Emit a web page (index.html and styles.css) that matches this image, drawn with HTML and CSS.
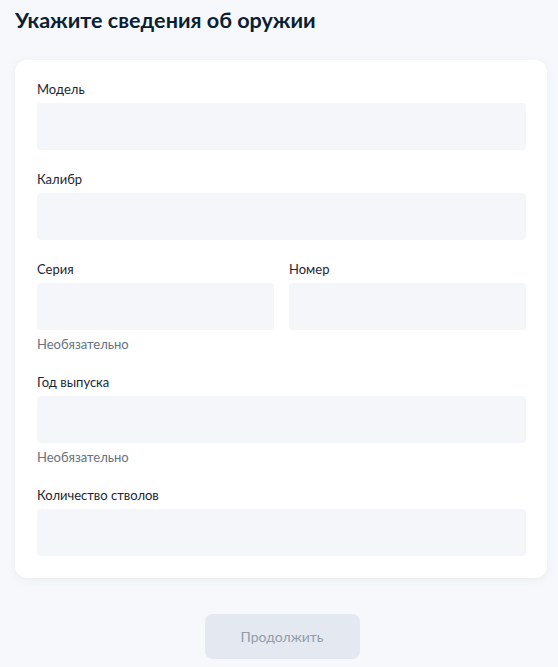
FILE: index.html
```html
<!DOCTYPE html>
<html lang="ru">
<head>
<meta charset="utf-8">
<title>Сведения об оружии</title>
<link rel="stylesheet" href="styles.css">
</head>
<body>
<main class="page">
  <h1 class="title">Укажите сведения об оружии</h1>
  <section class="card">
    <div class="field">
      <label class="label">Модель</label>
      <div class="input"></div>
    </div>
    <div class="field">
      <label class="label">Калибр</label>
      <div class="input"></div>
    </div>
    <div class="row">
      <div class="field">
        <label class="label">Серия</label>
        <div class="input"></div>
        <div class="hint">Необязательно</div>
      </div>
      <div class="field">
        <label class="label">Номер</label>
        <div class="input"></div>
      </div>
    </div>
    <div class="field">
      <label class="label">Год выпуска</label>
      <div class="input"></div>
      <div class="hint">Необязательно</div>
    </div>
    <div class="field">
      <label class="label">Количество стволов</label>
      <div class="input"></div>
    </div>
  </section>
  <div class="actions">
    <button class="btn" type="button" disabled>Продолжить</button>
  </div>
</main>
</body>
</html>
```
FILE: styles.css
```css
html, body {
  margin: 0;
  padding: 0;
  background: #f6f8fb;
  font-family: Lato, "Noto Sans", sans-serif;
  color: #0b1f33;
}

.page {
  padding: 0 11px 0 15px;
}

.title {
  margin: 0;
  padding-top: 6px;
  font-size: 21.6px;
  line-height: 28px;
  font-weight: 700;
  color: #0b1f33;
}

.card {
  margin-top: 26px;
  background: #ffffff;
  border-radius: 12px;
  box-shadow: 0 2px 8px rgba(180, 190, 210, 0.18);
  padding: 20px 21px 22px 22px;
  display: flex;
  flex-direction: column;
  gap: 20px;
}

.row {
  display: grid;
  grid-template-columns: 1fr 1fr;
  column-gap: 15px;
  align-items: start;
}

.field {
  display: flex;
  flex-direction: column;
}

.label {
  font-size: 13px;
  line-height: 18px;
  color: #1a2633;
  margin-bottom: 5px;
}

.input {
  height: 47px;
  background: #f5f6f9;
  border-radius: 4px;
}

.hint {
  margin-top: 5px;
  font-size: 13px;
  line-height: 18px;
  color: #66727f;
}

.actions {
  display: flex;
  justify-content: center;
  padding-top: 36px;
}

.btn {
  width: 155px;
  height: 45px;
  border: 0;
  border-radius: 8px;
  background: #e4e8f1;
  color: #929cab;
  font-family: Lato, "Noto Sans", sans-serif;
  font-size: 14px;
  margin-left: 2px;
}
```
